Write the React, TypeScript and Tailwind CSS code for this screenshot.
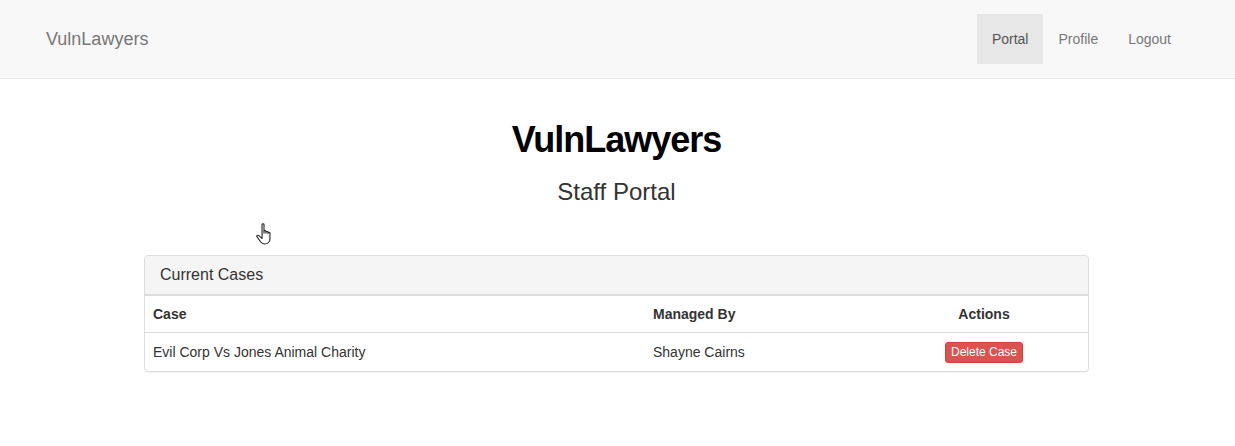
export default function App() {
  const cases = [{ name: "Evil Corp Vs Jones Animal Charity", manager: "Shayne Cairns" }]

  return (
    <div className="min-h-[446px] bg-white text-[14px] text-[#333] font-['Liberation_Sans',Arial,sans-serif]">
      {/* Navbar */}
      <nav className="flex h-[79px] items-center justify-between border-b border-[#e7e7e7] bg-[#f8f8f8] pl-[46px] pr-[49px]">
        <a className="text-[18px] leading-[20px] text-[#777]">VulnLawyers</a>
        <ul className="flex">
          <li className="flex h-[50px] items-center bg-[#e7e7e7] px-[15px] text-[#555]">Portal</li>
          <li className="flex h-[50px] items-center px-[15px] text-[#777]">Profile</li>
          <li className="flex h-[50px] items-center px-[15px] text-[#777]">Logout</li>
        </ul>
      </nav>

      <div className="relative ml-[144px] w-[945px]">
        <div className="pt-[41px] text-center">
          <h1 className="text-[36px] font-bold leading-[40px] tracking-[-1px] text-black">VulnLawyers</h1>
          <h3 className="mt-[19px] text-[24px] leading-[26px] text-[#333]">Staff Portal</h3>
        </div>

        {/* cursor */}
        <svg
          className="absolute left-[112px] top-[144px]"
          width="17"
          height="23"
          viewBox="0.6 0.8 13.8 21.4"
          preserveAspectRatio="none"
          fill="white"
          stroke="#222"
          strokeWidth="0.9"
          strokeLinejoin="round"
        >
          <path d="M5.5 2.2c0-1 1.6-1 1.6 0v8.2V8.6c0-1 1.6-1 1.6 0v1.8-.9c0-1 1.6-1 1.6 0v1.2-.5c0-1 1.6-1 1.6 0v5.3c0 2.6-1.6 4.9-4.2 4.9H7.5c-1.5 0-2.4-.9-3.2-2.1L1.4 13.6c-.6-1 .7-1.8 1.5-1l2.6 2.6z" />
        </svg>

        {/* Panel */}
        <div className="mt-[50px] overflow-hidden rounded-[4px] border border-[#ddd] shadow-[0_1px_1px_rgba(0,0,0,0.05)]">
          <div className="border-b-2 border-[#ddd] bg-[#f5f5f5] px-[15px] py-[9px] text-[16px] leading-[20px] text-[#333]">
            Current Cases
          </div>
          <table className="w-full border-collapse text-left">
            <thead>
              <tr className="border-b border-[#ddd]">
                <th className="w-[500px] p-[8px] leading-[20px] font-bold">Case</th>
                <th className="w-[235px] p-[8px] leading-[20px] font-bold">Managed By</th>
                <th className="p-[8px] text-center leading-[20px] font-bold">Actions</th>
              </tr>
            </thead>
            <tbody>
              {cases.map((c) => (
                <tr key={c.name}>
                  <td className="p-[8px] leading-[20px]">{c.name}</td>
                  <td className="p-[8px] leading-[20px]">{c.manager}</td>
                  <td className="p-[8px] text-center leading-[20px]">
                    <button className="rounded-[3px] border border-[#d43f3a] bg-[#d9534f] px-[5px] text-[12px] leading-[19px] text-white">
                      Delete Case
                    </button>
                  </td>
                </tr>
              ))}
            </tbody>
          </table>
        </div>
      </div>
    </div>
  )
}
